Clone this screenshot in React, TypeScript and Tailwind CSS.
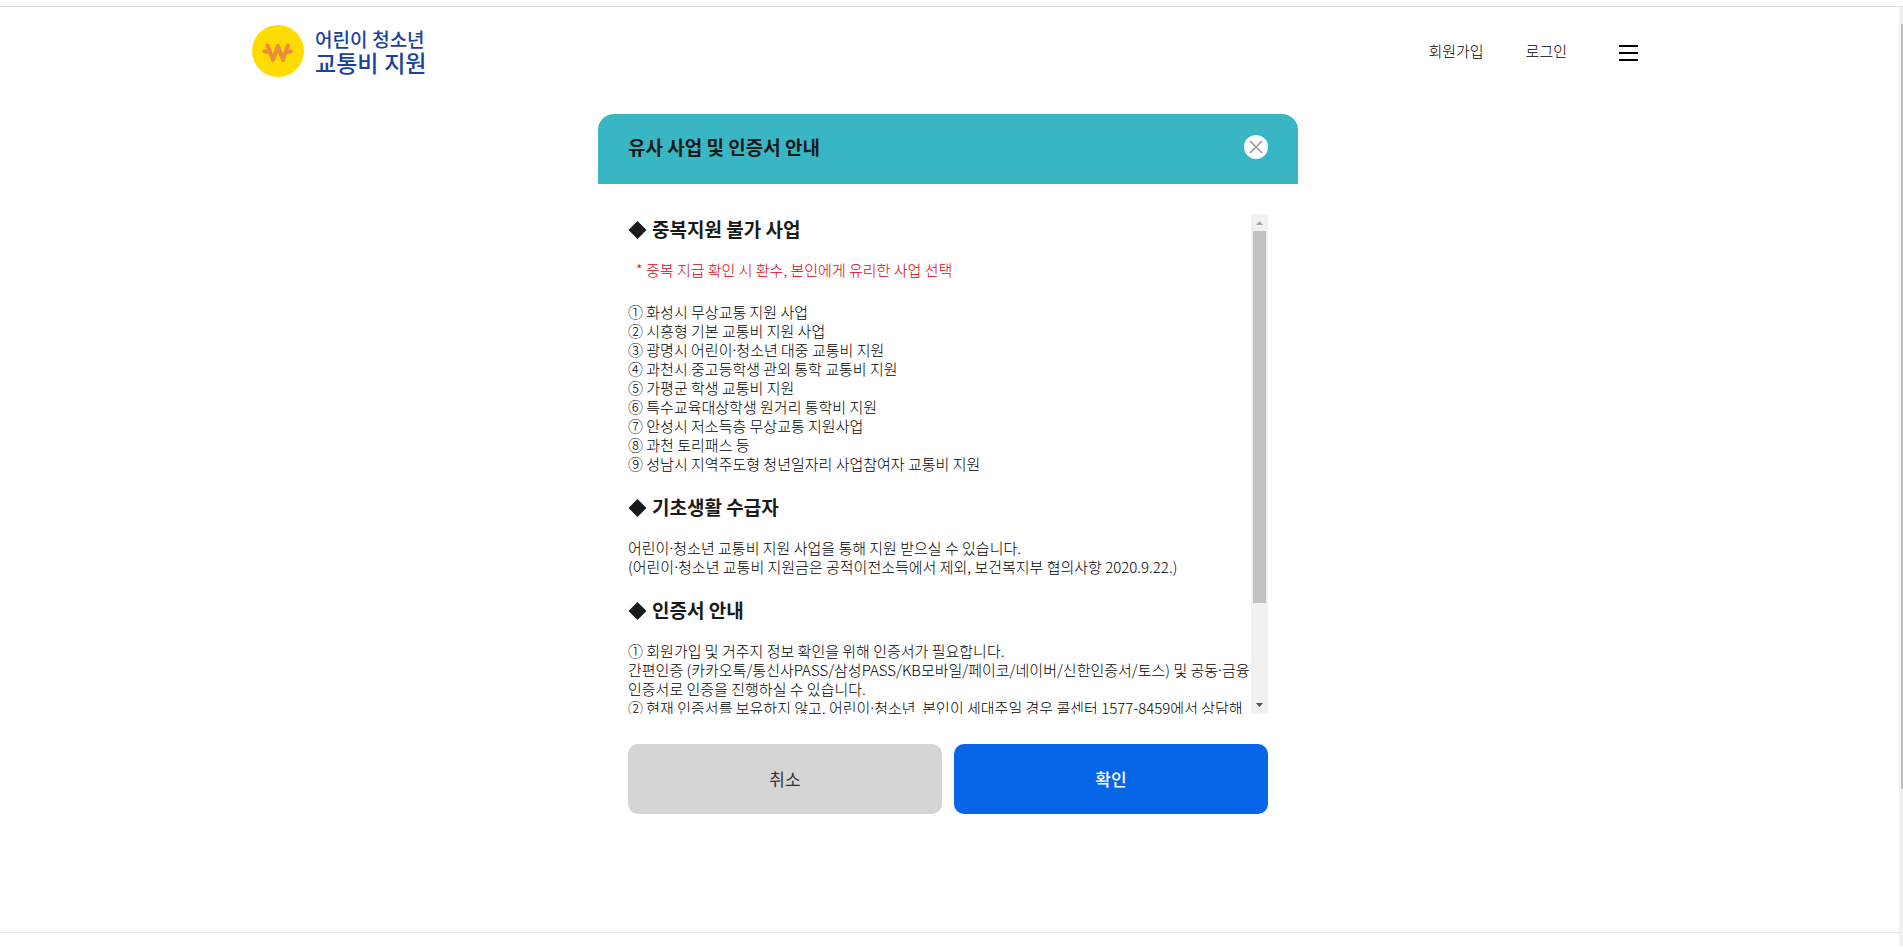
import { Fragment, useState } from 'react'

const SIMILAR_PROJECTS = [
  '① 화성시 무상교통 지원 사업',
  '② 시흥형 기본 교통비 지원 사업',
  '③ 광명시 어린이·청소년 대중 교통비 지원',
  '④ 과천시 중고등학생 관외 통학 교통비 지원',
  '⑤ 가평군 학생 교통비 지원',
  '⑥ 특수교육대상학생 원거리 통학비 지원',
  '⑦ 안성시 저소득층 무상교통 지원사업',
  '⑧ 과천 토리패스 등',
  '⑨ 성남시 지역주도형 청년일자리 사업참여자 교통비 지원',
]

const BASIC_LIVING = [
  '어린이·청소년 교통비 지원 사업을 통해 지원 받으실 수 있습니다.',
  '(어린이·청소년 교통비 지원금은 공적이전소득에서 제외, 보건복지부 협의사항 2020.9.22.)',
]

const CERTIFICATE = [
  '① 회원가입 및 거주지 정보 확인을 위해 인증서가 필요합니다.',
  '간편인증 (카카오톡/통신사PASS/삼성PASS/KB모바일/페이코/네이버/신한인증서/토스) 및 공동·금융',
  '인증서로 인증을 진행하실 수 있습니다.',
  '② 현재 인증서를 보유하지 않고, 어린이·청소년\u00a0 본인이 세대주일 경우 콜센터 1577-8459에서 상담해',
]

function Logo() {
  return (
    <a href="#home" className="flex items-center gap-[11px] font-['Roboto','Noto_Sans_CJK_KR',sans-serif] text-[#1a429a]">
      <svg className="size-[52px]" viewBox="0 0 52 52" aria-hidden="true">
        <circle cx="26" cy="26" r="26" fill="#ffdc00" />
        <g fill="none" stroke="#f28a3c" strokeWidth="4" strokeLinecap="round" strokeLinejoin="round">
          <path d="M15.5 20.5 L18 27 L21 35 L26 21 L31 35 L33.5 27 L36 20.5" />
          <path d="M12.5 26.5 L18 27 M34 27 L39 26.5" />
        </g>
      </svg>
      <span className="flex flex-col pt-1 whitespace-nowrap">
        <span className="text-[19px] leading-[23px] font-medium">어린이 청소년</span>
        <span className="text-[23px] leading-[26px] font-medium">교통비 지원</span>
      </span>
    </a>
  )
}

function Header() {
  return (
    <header className="mx-auto flex h-[88px] w-full max-w-[1392px] items-center justify-between">
      <Logo />
      <nav className="flex items-center text-[15px] font-light text-black">
        <a href="#join">회원가입</a>
        <a href="#login" className="ml-[42px]">로그인</a>
        <button type="button" aria-label="메뉴" className="mt-1 mr-1.5 ml-[52px] flex w-[19px] flex-col gap-[5px]">
          <span className="h-0.5 w-full bg-black" />
          <span className="h-0.5 w-full bg-black" />
          <span className="h-0.5 w-full bg-black" />
        </button>
      </nav>
    </header>
  )
}

function SectionTitle({ children }: { children: string }) {
  return (
    <h3 className="mb-4 flex items-center gap-[5px] text-[19px] leading-[30px] font-bold text-[#1a1a1a]">
      <svg className="size-[19px]" viewBox="0 0 19 19" aria-hidden="true">
        <path d="M9.5 1 L18.5 10 L9.5 19 L0.5 10 Z" fill="#1a1a1a" />
      </svg>
      {children}
    </h3>
  )
}

// The middle dot of the Korean font is too wide between words, so it takes Roboto's
function Line({ text }: { text: string }) {
  return text.split('·').map((part, i) => (
    <Fragment key={i}>
      {i > 0 && <span className="font-['Roboto',sans-serif] leading-none font-normal">·</span>}
      {part}
    </Fragment>
  ))
}

function Lines({ lines }: { lines: string[] }) {
  return (
    <p>
      {lines.map((text, i) => (
        <Fragment key={text}>
          {i > 0 && <br />}
          <Line text={text} />
        </Fragment>
      ))}
    </p>
  )
}

// Classic square scrollbar next to the notice text
function ScrollTrack() {
  return (
    <div className="flex w-[17px] shrink-0 flex-col items-center bg-[#f1f1f1]" aria-hidden="true">
      <svg className="size-[17px]" viewBox="0 0 17 17">
        <path d="M5 11 L8.5 7 L12 11 Z" fill="#a3a3a3" />
      </svg>
      <div className="h-[372px] w-[13px] bg-[#c1c1c1]" />
      <svg className="mt-auto size-[17px]" viewBox="0 0 17 17">
        <path d="M5 6 L8.5 10 L12 6 Z" fill="#505050" />
      </svg>
    </div>
  )
}

function Notice() {
  return (
    <div className="flex h-[500px]">
      <div className="min-w-0 flex-1 overflow-y-auto whitespace-nowrap text-[15px] leading-[19px] font-light text-black [scrollbar-width:none]">
        <section>
          <SectionTitle>중복지원 불가 사업</SectionTitle>
          <p className="mb-[23px] pl-2 text-[#d9000f]">* 중복 지급 확인 시 환수, 본인에게 유리한 사업 선택</p>
          <ul>
            {SIMILAR_PROJECTS.map((name) => (
              <li key={name}>
                <Line text={name} />
              </li>
            ))}
          </ul>
        </section>

        <section className="mt-[19px]">
          <SectionTitle>기초생활 수급자</SectionTitle>
          <Lines lines={BASIC_LIVING} />
        </section>

        <section className="mt-[19px]">
          <SectionTitle>인증서 안내</SectionTitle>
          <Lines lines={CERTIFICATE} />
        </section>
      </div>
      <ScrollTrack />
    </div>
  )
}

function GuideModal({ onClose }: { onClose: () => void }) {
  return (
    <section role="dialog" aria-labelledby="guide-title" className="mx-auto mt-[19px] w-full max-w-[700px]">
      <div className="flex h-[70px] items-center justify-between rounded-t-2xl bg-[#38b6c4] px-[30px] pb-1">
        <h2 id="guide-title" className="text-[19px] font-bold text-[#1a1a1a]">유사 사업 및 인증서 안내</h2>
        <button type="button" aria-label="닫기" onClick={onClose}>
          <svg className="size-6" viewBox="0 0 24 24">
            <circle cx="12" cy="12" r="12" fill="#fff" />
            <path d="M6 6 L18 18 M18 6 L6 18" stroke="#999" strokeWidth="1.6" />
          </svg>
        </button>
      </div>
      <div className="p-[30px]">
        <Notice />
        <div className="mt-[30px] grid grid-cols-2 gap-3 text-[17px]">
          <button type="button" onClick={onClose} className="h-[70px] rounded-[10px] bg-[#d5d5d5] text-[#333]">
            취소
          </button>
          <button type="button" onClick={onClose} className="h-[70px] rounded-[10px] bg-[#0766e8] font-medium text-white">
            확인
          </button>
        </div>
      </div>
    </section>
  )
}

export default function App() {
  const [open, setOpen] = useState(true)

  return (
    <div className="min-h-screen bg-white pt-1.5 font-['Noto_Sans_CJK_KR',sans-serif]">
      <div className="flex border-t border-[#e0e0e0]">
        <div className="flex min-w-0 flex-1 flex-col pr-[3px]">
          <Header />
          <main className="min-h-[837px]">{open && <GuideModal onClose={() => setOpen(false)} />}</main>
          <footer className="-mr-[3px] h-[14px] border-t border-[#e8e8e8]" />
        </div>
        <div className="w-1 bg-[#f1f1f1] pt-[17px] pl-0.5" aria-hidden="true">
          <div className="h-[765px] bg-[#c1c1c1]" />
        </div>
      </div>
    </div>
  )
}
